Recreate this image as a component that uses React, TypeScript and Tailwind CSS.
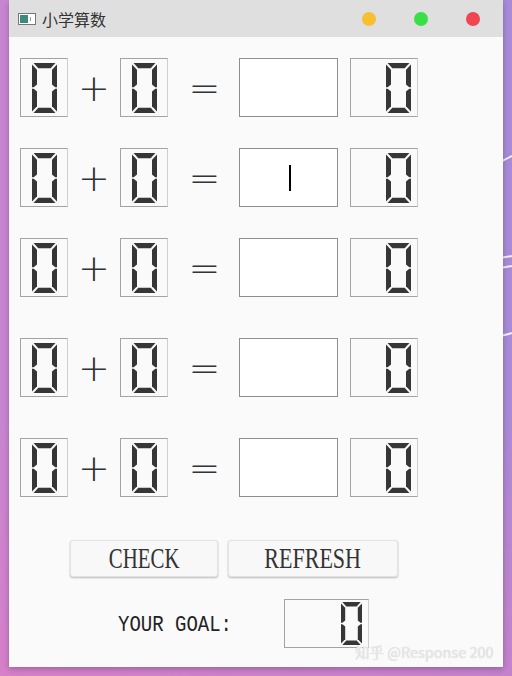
import React from 'react';

function Digit({ w, h }: { w: number; h: number }) {
  // seven-segment "0" (no middle bar)
  return (
    <svg width={w} height={h} viewBox="0 0 26 50" preserveAspectRatio="none">
      <g fill="#363636">
        <polygon points="1.6,0 24.4,0 19.4,5.2 6.6,5.2" />
        <polygon points="1.6,50 24.4,50 19.4,44.8 6.6,44.8" />
        <polygon points="0,1.6 5.2,6.8 5.2,21.6 1.8,24.2 0,24.2" />
        <polygon points="26,1.6 20.8,6.8 20.8,21.6 24.2,24.2 26,24.2" />
        <polygon points="0,48.4 5.2,43.2 5.2,28.4 1.8,25.8 0,25.8" />
        <polygon points="26,48.4 20.8,43.2 20.8,28.4 24.2,25.8 26,25.8" />
      </g>
    </svg>
  );
}

function Lcd({ className, right, w, h }: { className: string; right?: boolean; w: number; h: number }) {
  return (
    <div
      className={
        'flex items-center border border-[#a3a3a3] border-r-[#cfcfcf] bg-[#fafafa] ' +
        (right ? 'justify-end ' : 'justify-center ') +
        className
      }
    >
      <Digit w={w} h={h} />
    </div>
  );
}

function Row({ top, cursor }: { top: string; cursor?: boolean }) {
  return (
    <div className={'flex items-center h-[59px] pl-[11px] ' + top}>
      <Lcd className="w-[48px] h-[59px] pt-[1px]" w={25} h={50} />
      <div className="w-[52px] text-center text-[38px] font-light leading-none text-[#333] [font-family:'DejaVu_Sans',sans-serif]">
        +
      </div>
      <Lcd className="w-[48px] h-[59px] pt-[1px]" w={25} h={50} />
      <div className="w-[71px] text-center text-[38px] font-light leading-none text-[#333] pl-[2px] [font-family:'DejaVu_Sans',sans-serif]">
        =
      </div>
      <div className="w-[99px] h-[59px] bg-white border border-[#8e8e8e] flex items-center justify-center">
        {cursor && <div className="w-[2px] h-[26px] bg-black ml-[2px]" />}
      </div>
      <Lcd className="ml-[12px] w-[68px] h-[59px] pr-[6px] pt-[1px]" right w={25} h={50} />
    </div>
  );
}

export default function App() {
  return (
    <div className="w-[512px] h-[676px] overflow-hidden bg-[linear-gradient(90deg,#c886d2_0%,#b88ad6_50%,#a98ad8_100%)] relative">
      <div className="absolute inset-0 bg-[linear-gradient(180deg,rgba(0,0,0,0)_60%,rgba(230,120,190,0.45)_100%)]" />
      <svg className="absolute right-0 top-0" width="12" height="676" viewBox="0 0 12 676">
        <path d="M0 162 Q6 159 12 156" stroke="#f3eefa" strokeWidth="2" fill="none" />
        <path d="M0 258 Q6 257 12 256" stroke="#f3eefa" strokeWidth="2" fill="none" />
        <path d="M0 268 Q6 267 12 266" stroke="#f3eefa" strokeWidth="2" fill="none" />
        <path d="M0 336 Q6 335 12 333" stroke="#f3eefa" strokeWidth="2" fill="none" />
      </svg>
      <div className="relative ml-[9px] w-[494px] h-[667px] bg-[#fafafa] shadow-[0_2px_6px_rgba(0,0,0,0.25)] flex flex-col">
        <div className="h-[37px] bg-[#dfdfdf] flex items-center pl-[9px] shrink-0">
          <div className="w-[18px] h-[12px] border border-[#777] bg-white flex items-center pl-[1px] gap-[2px]">
            <div className="w-[8px] h-[8px] bg-[#3d8a7c]" />
            <div className="w-[1px] h-[4px] bg-[#999]" />
          </div>
          <span className="ml-[6px] text-[16px] text-[#333] [font-family:'Noto_Sans_CJK_SC',sans-serif]">
            小学算数
          </span>
          <div className="ml-auto flex items-center gap-[38px] mr-[23px]">
            <div className="w-[14px] h-[14px] rounded-full bg-[#f8c030]" />
            <div className="w-[14px] h-[14px] rounded-full bg-[#3adf48]" />
            <div className="w-[14px] h-[14px] rounded-full bg-[#ef4650]" />
          </div>
        </div>
        <Row top="mt-[21px]" />
        <Row top="mt-[31px]" cursor />
        <Row top="mt-[31px]" />
        <Row top="mt-[41px]" />
        <Row top="mt-[41px]" />
        <div className="flex mt-[43px] pl-[61px] gap-[10px]">
          <button className="w-[148px] h-[37px] bg-[#f8f8f8] border border-[#e2e2e2] rounded-[3px] shadow-[0_1px_2px_rgba(0,0,0,0.25)] flex items-center justify-center">
            <span className="inline-block text-[29px] leading-none text-[#333] scale-x-[0.72] [font-family:'Liberation_Serif',serif]">
              CHECK
            </span>
          </button>
          <button className="w-[170px] h-[37px] bg-[#f8f8f8] border border-[#e2e2e2] rounded-[3px] shadow-[0_1px_2px_rgba(0,0,0,0.25)] flex items-center justify-center">
            <span className="inline-block text-[29px] leading-none text-[#333] scale-x-[0.76] [font-family:'Liberation_Serif',serif]">
              REFRESH
            </span>
          </button>
        </div>
        <div className="flex items-center mt-[22px] pl-[109px]">
          <span className="w-[166px] pt-[3px] text-[19px] leading-none text-[#222] scale-y-[1.12] origin-left [font-family:'Liberation_Mono',monospace]">
            YOUR GOAL:
          </span>
          <Lcd className="w-[85px] h-[49px] pr-[6px]" right w={21} h={43} />
        </div>
      </div>
      <div className="absolute left-[355px] top-[641px] whitespace-nowrap text-[14.5px] text-[#e6e6e6] [font-family:'Noto_Sans_CJK_SC',sans-serif] [text-shadow:0_0_1px_rgba(0,0,0,0.15)]">
        知乎 @Response 200
      </div>
    </div>
  );
}
